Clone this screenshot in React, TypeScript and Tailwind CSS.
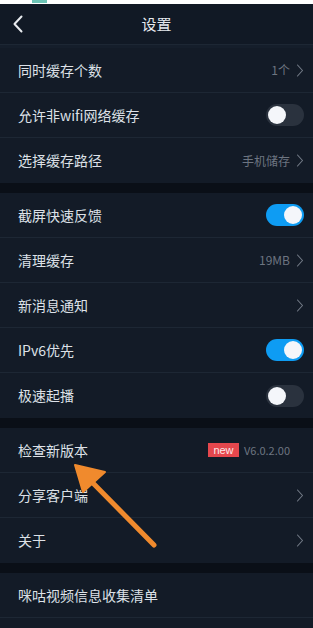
import React from "react";

const font = { fontFamily: '"Noto Sans CJK SC", "Noto Sans", sans-serif' };

function Chevron() {
  return (
    <svg width="8" height="13" viewBox="0 0 8 13" className="ml-[6px]">
      <path d="M1.5 1 L6.5 6.5 L1.5 12" fill="none" stroke="#737b87" strokeWidth="1.1" strokeLinecap="round" strokeLinejoin="round" />
    </svg>
  );
}

function Toggle({ on }: { on: boolean }) {
  return (
    <div className={`w-[38px] h-[22px] rounded-full flex items-center px-[2px] ${on ? "bg-[#0e9cf3] justify-end" : "bg-[#2a323e] justify-start"}`}>
      <div className="w-[18px] h-[18px] rounded-full bg-[#f4f6fa]" />
    </div>
  );
}

type Row = { label: string; value?: string; chevron?: boolean; toggle?: boolean; badge?: boolean };

function SettingRow({ r, last }: { r: Row; last?: boolean }) {
  return (
    <div className={`h-[45px] flex items-center pl-[18px] pr-[9px] ${last ? "" : "border-b border-[#1d2734]"}`}>
      <span className="text-[14px] text-[#dde1e7] flex-1">{r.label}</span>
      {r.badge && (
        <span className="bg-[#e5474d] text-[#fbeaea] text-[11px] leading-[14px] w-[31px] text-center mr-[5px]" style={{ fontFamily: '"Liberation Sans", Arial, sans-serif' }}>new</span>
      )}
      {r.value && <span className={`${r.badge ? "text-[11px]" : "text-[12px]"} text-[#6d7581]`}>{r.value}</span>}
      {r.chevron && <Chevron />}
      {r.badge && <div className="w-[14px]" />}
      {r.toggle !== undefined && <Toggle on={!!r.toggle} />}
    </div>
  );
}

const groups: Row[][] = [
  [
    { label: "同时缓存个数", value: "1个", chevron: true },
    { label: "允许非wifi网络缓存", toggle: false },
    { label: "选择缓存路径", value: "手机储存", chevron: true },
  ],
  [
    { label: "截屏快速反馈", toggle: true },
    { label: "清理缓存", value: "19MB", chevron: true },
    { label: "新消息通知", chevron: true },
    { label: "IPv6优先", toggle: true },
    { label: "极速起播", toggle: false },
  ],
  [
    { label: "检查新版本", value: "V6.0.2.00", badge: true },
    { label: "分享客户端", chevron: true },
    { label: "关于", chevron: true },
  ],
  [{ label: "咪咕视频信息收集清单" }],
];

export default function App() {
  return (
    <div className="relative w-[313px] h-[628px] overflow-hidden bg-[#131b27]" style={font}>
      <div className="h-[4px] bg-white relative">
        <div className="absolute left-[32px] top-0 w-[15px] h-[3px] bg-[#6cc3b5]" />
      </div>
      <div className="h-[40px] bg-[#111925] flex items-center relative">
        <svg width="12" height="18" viewBox="0 0 12 18" className="absolute left-[12px] top-[11px]">
          <path d="M9.5 1.5 L2.5 9 L9.5 16.5" fill="none" stroke="#e8ebef" strokeWidth="2" strokeLinecap="round" strokeLinejoin="round" />
        </svg>
        <div className="flex-1 text-center text-[15px] text-[#e6e9ee]">设置</div>
      </div>
      <div className="h-[4px] bg-[#151e2b] border-t border-[#1d2734]" />
      {groups.map((g, gi) => (
        <div key={gi}>
          {gi > 0 && <div className="h-[10px] bg-[#0a0f17]" />}
          {g.map((r, ri) => (
            <SettingRow key={ri} r={r} last={ri === g.length - 1 && gi < groups.length - 1} />
          ))}
        </div>
      ))}
      <svg className="absolute left-0 top-0 pointer-events-none" width="313" height="628" viewBox="0 0 313 628">
        <line x1="154" y1="545" x2="88" y2="478" stroke="#f08a2d" strokeWidth="5" strokeLinecap="round" />
        <path d="M75 465 L105 472 L83 492 Z" fill="#f08a2d" stroke="#f08a2d" strokeWidth="2" strokeLinejoin="round" />
      </svg>
    </div>
  );
}
